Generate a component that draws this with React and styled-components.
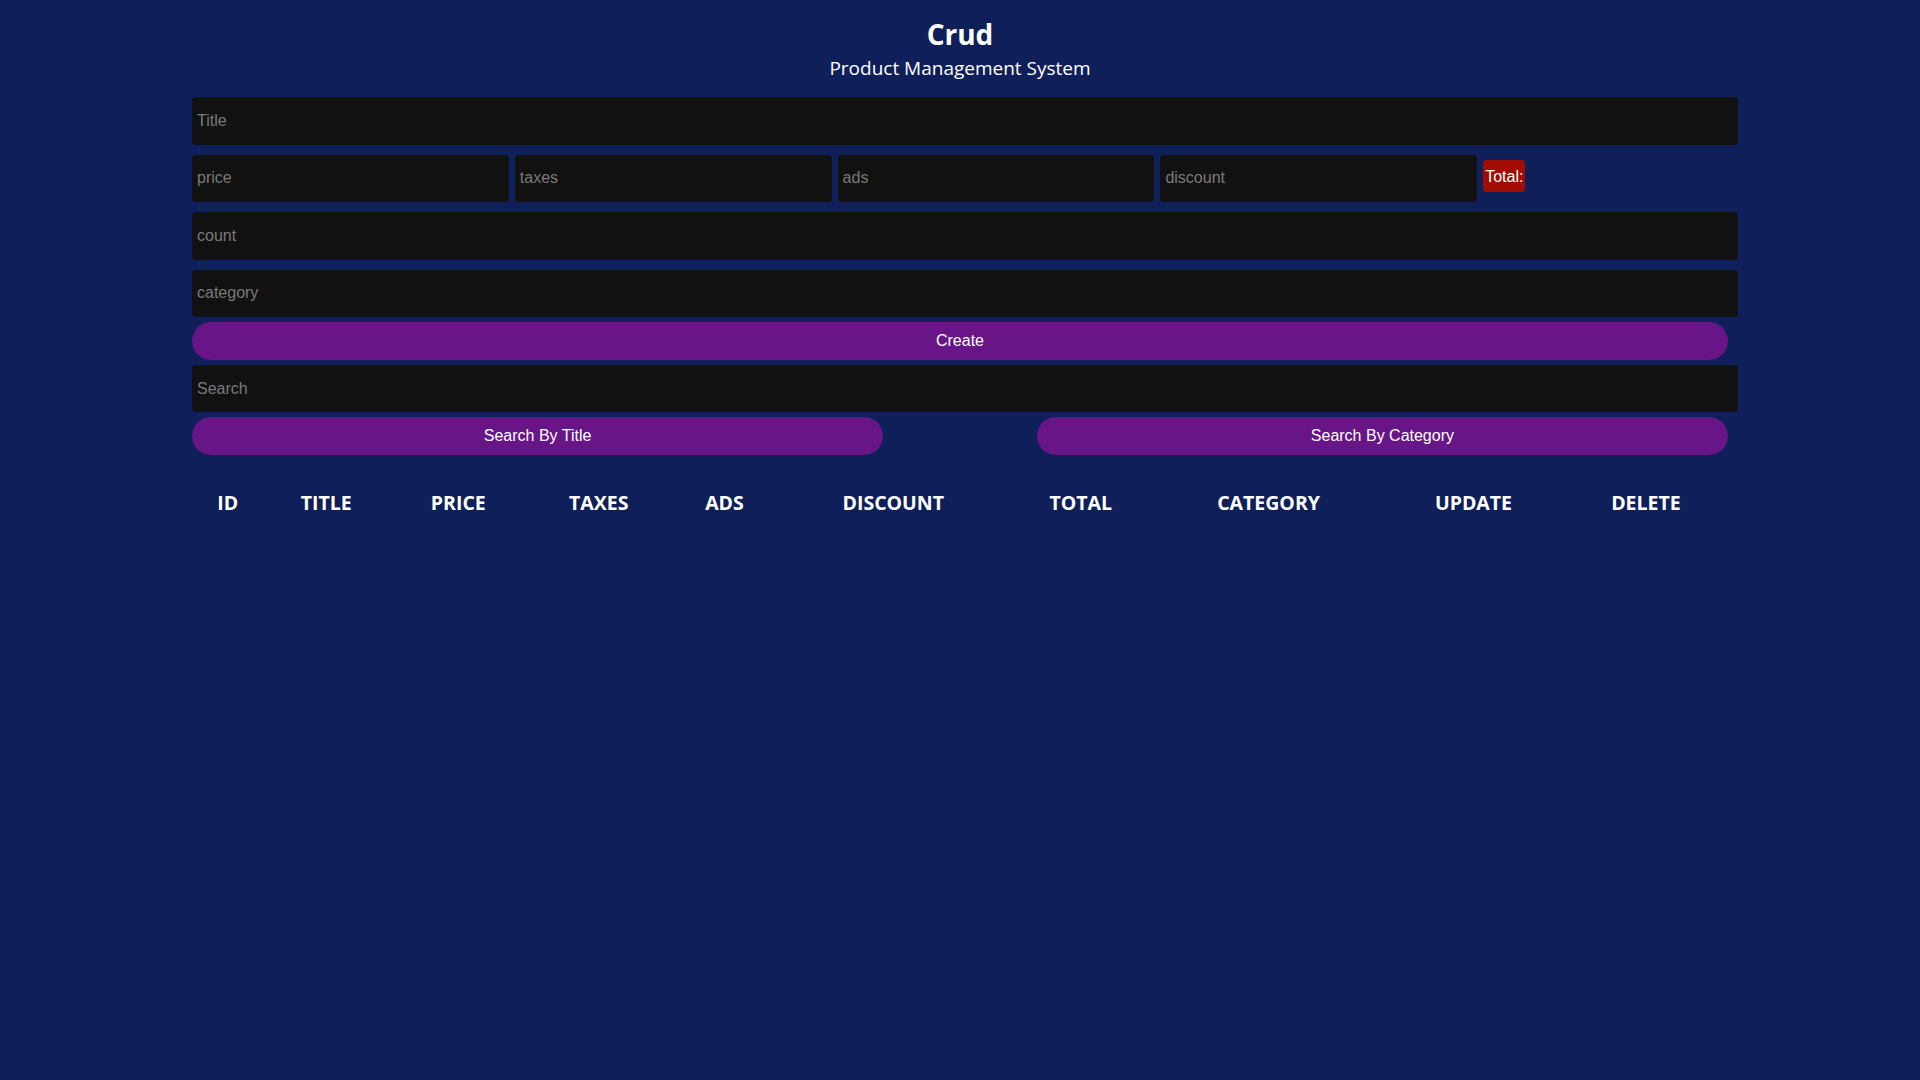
import React from "react";
import styled, { createGlobalStyle } from "styled-components";

const GlobalStyle = createGlobalStyle`
  html, body {
    margin: 0;
    padding: 0;
    background: #0f1f59;
    min-height: 100vh;
  }
  body {
    font-family: "Liberation Sans", Arial, sans-serif;
    color: #ffffff;
  }
  * { box-sizing: border-box; }
`;

const Page = styled.div`
  width: 1536px;
  margin: 0 auto;
  padding-top: 15px;
`;

const Header = styled.header`
  display: flex;
  flex-direction: column;
  align-items: center;
  font-family: "Segoe UI", "Open Sans", sans-serif;
  color: #ffffff;
`;

const Heading = styled.h1`
  margin: 0;
  font-size: 28px;
  line-height: 38px;
  font-weight: 700;
`;

const Subtitle = styled.p`
  margin: 1px 0 0;
  font-size: 19px;
  line-height: 28px;
  font-weight: 400;
`;

const Form = styled.section`
  display: flex;
  flex-direction: column;
  margin-top: 15px;
`;

const Field = styled.input`
  display: block;
  width: ${(p) => p.$width || "calc(100% + 10px)"};
  height: ${(p) => p.$height || "47.5px"};
  padding: 0 5px;
  border: none;
  outline: none;
  border-radius: 4px;
  background: #111111;
  color: #ffffff;
  font-family: "Liberation Sans", Arial, sans-serif;
  font-size: 16px;
  margin-top: ${(p) => p.$gap || "0px"};
  flex: none;
  &::placeholder {
    color: #7a7a7a;
  }
`;

const PriceRow = styled.div`
  display: flex;
  align-items: flex-start;
  gap: 6px;
  margin-top: 10px;
`;

const TotalBadge = styled.small`
  display: flex;
  align-items: center;
  height: 32px;
  margin-top: 5px;
  padding: 2px 2px 0;
  border-radius: 4px;
  background: #a10d05;
  color: #ffffff;
  font-family: "Liberation Sans", Arial, sans-serif;
  font-size: 16px;
`;

const PillButton = styled.button`
  display: block;
  width: ${(p) => p.$width || "100%"};
  height: 38px;
  margin-top: 5px;
  padding: 0;
  border: none;
  border-radius: 19px;
  background: #681588;
  color: #ffffff;
  font-family: "Liberation Sans", Arial, sans-serif;
  font-size: 16px;
  cursor: pointer;
`;

const SearchButtons = styled.div`
  display: flex;
  justify-content: space-between;
`;

const Table = styled.div`
  display: grid;
  grid-template-columns: 71.6px 125.2px 139px 142px 109.4px 228.2px 146.8px 228.8px 181px 164px;
  margin-top: 33px;
`;

const Th = styled.div`
  text-align: center;
  font-family: "Segoe UI", "Open Sans", sans-serif;
  font-weight: 700;
  font-size: 19.5px;
  line-height: 30px;
  text-transform: uppercase;
  color: #ffffff;
  white-space: nowrap;
`;

const columns = ["id", "title", "price", "taxes", "ads", "discount", "total", "category", "update", "delete"];

export default function App() {
  return (
    <>
      <GlobalStyle />
      <Page>
        <Header>
          <Heading>Crud</Heading>
          <Subtitle>Product Management System</Subtitle>
        </Header>
        <Form>
          <Field placeholder="Title" />
          <PriceRow>
            <Field $width="316.8px" placeholder="price" />
            <Field $width="316.8px" placeholder="taxes" />
            <Field $width="316.8px" placeholder="ads" />
            <Field $width="316.8px" placeholder="discount" />
            <TotalBadge>Total:</TotalBadge>
          </PriceRow>
          <Field $gap="10px" placeholder="count" />
          <Field $gap="10px" placeholder="category" />
          <PillButton>Create</PillButton>
          <Field $gap="5px" $height="47px" placeholder="Search" />
          <SearchButtons>
            <PillButton $width="45%">Search By Title</PillButton>
            <PillButton $width="45%">Search By Category</PillButton>
          </SearchButtons>
        </Form>
        <Table>
          {columns.map((c) => (
            <Th key={c}>{c}</Th>
          ))}
        </Table>
      </Page>
    </>
  );
}
